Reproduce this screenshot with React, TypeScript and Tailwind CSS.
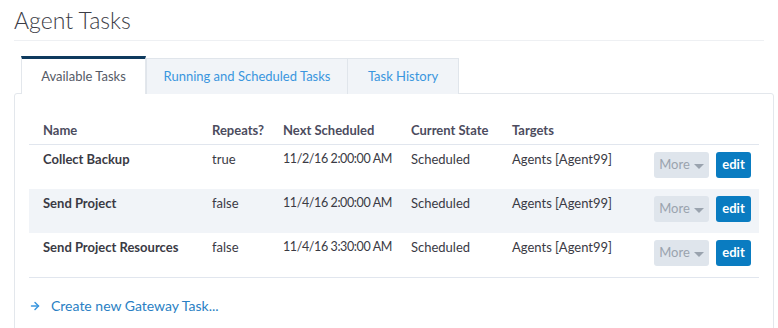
import { ArrowRight } from 'lucide-react';

const rows = [
  { name: 'Collect Backup', repeats: 'true', next: '11/2/16 2:00:00 AM', state: 'Scheduled', targets: 'Agents [Agent99]' },
  { name: 'Send Project', repeats: 'false', next: '11/4/16 2:00:00 AM', state: 'Scheduled', targets: 'Agents [Agent99]' },
  { name: 'Send Project Resources', repeats: 'false', next: '11/4/16 3:30:00 AM', state: 'Scheduled', targets: 'Agents [Agent99]' },
];

export default function App() {
  return (
    <div className="w-[778px] h-[328px] bg-white overflow-hidden px-[14px] text-[13px] text-[#3a3a44]" style={{ fontFamily: 'Lato, "Open Sans", sans-serif' }}>
      <h1 className="pt-[5px] pb-[5px] text-[23px] font-light text-[#3c3c46] leading-[30px] border-b border-[#eef0f3]">
        Agent Tasks
      </h1>

      <div className="flex mt-[15px] pl-[7px] h-[38px]">
        <div className="w-[125px] bg-white border-t-[3px] border-[#0e3a5e] border-x border-x-[#e3e7ec] flex items-center justify-center text-[#555a66] relative z-10">
          Available Tasks
        </div>
        <div className="w-[202px] bg-[#f1f4f8] border border-[#e0e5eb] border-b-0 mt-[2px] flex items-center justify-center text-[#3a96de]">
          Running and Scheduled Tasks
        </div>
        <div className="w-[111px] bg-[#f1f4f8] border border-[#e0e5eb] border-l-0 border-b-0 mt-[2px] flex items-center justify-center text-[#3a96de]">
          Task History
        </div>
      </div>

      <div className="-mt-px border border-[#e3e7ec] rounded-[3px] w-[760px] h-[240px] px-[14px] pt-[27px]">
        <div className="grid grid-cols-[169px_71px_128px_101px_1fr] px-[14px] h-[24px] border-b border-[#e1e6ee] font-bold text-[#4c4c5e] items-start">
          <div>Name</div>
          <div>Repeats?</div>
          <div>Next Scheduled</div>
          <div>Current State</div>
          <div>Targets</div>
        </div>
        {rows.map((r, i) => (
          <div
            key={r.name}
            className={`grid grid-cols-[169px_71px_128px_101px_1fr_auto] pl-[14px] pr-[8px] h-[44px] pt-[5px] ${i === 1 ? 'bg-[#f1f4f8]' : ''}`}
          >
            <div className="font-bold text-[#3a3a44]">{r.name}</div>
            <div>{r.repeats}</div>
            <div className="text-[12.5px] tracking-[-0.4px]">{r.next}</div>
            <div>{r.state}</div>
            <div>{r.targets}</div>
            <div className="flex gap-[7px] pt-[2px]">
              <button className="h-[26px] w-[55px] rounded-[3px] bg-[#dfe5ec] text-[#9aa3ae] flex items-center justify-center gap-[4px]">
                More
                <span className="w-0 h-0 border-x-[5px] border-x-transparent border-t-[5px] border-t-[#9aa3ae] mt-[2px]" />
              </button>
              <button className="h-[26px] w-[35px] rounded-[3px] bg-[#0a7cc1] text-white font-bold">edit</button>
            </div>
          </div>
        ))}
        <div className="border-t border-[#e1e6ee]" />
        <div className="flex items-center gap-[10px] mt-[17px] text-[14px] text-[#2a7fc4]">
          <ArrowRight size={12} strokeWidth={3} className="text-[#3a96de]" />
          <span>Create new Gateway Task...</span>
        </div>
      </div>
    </div>
  );
}
